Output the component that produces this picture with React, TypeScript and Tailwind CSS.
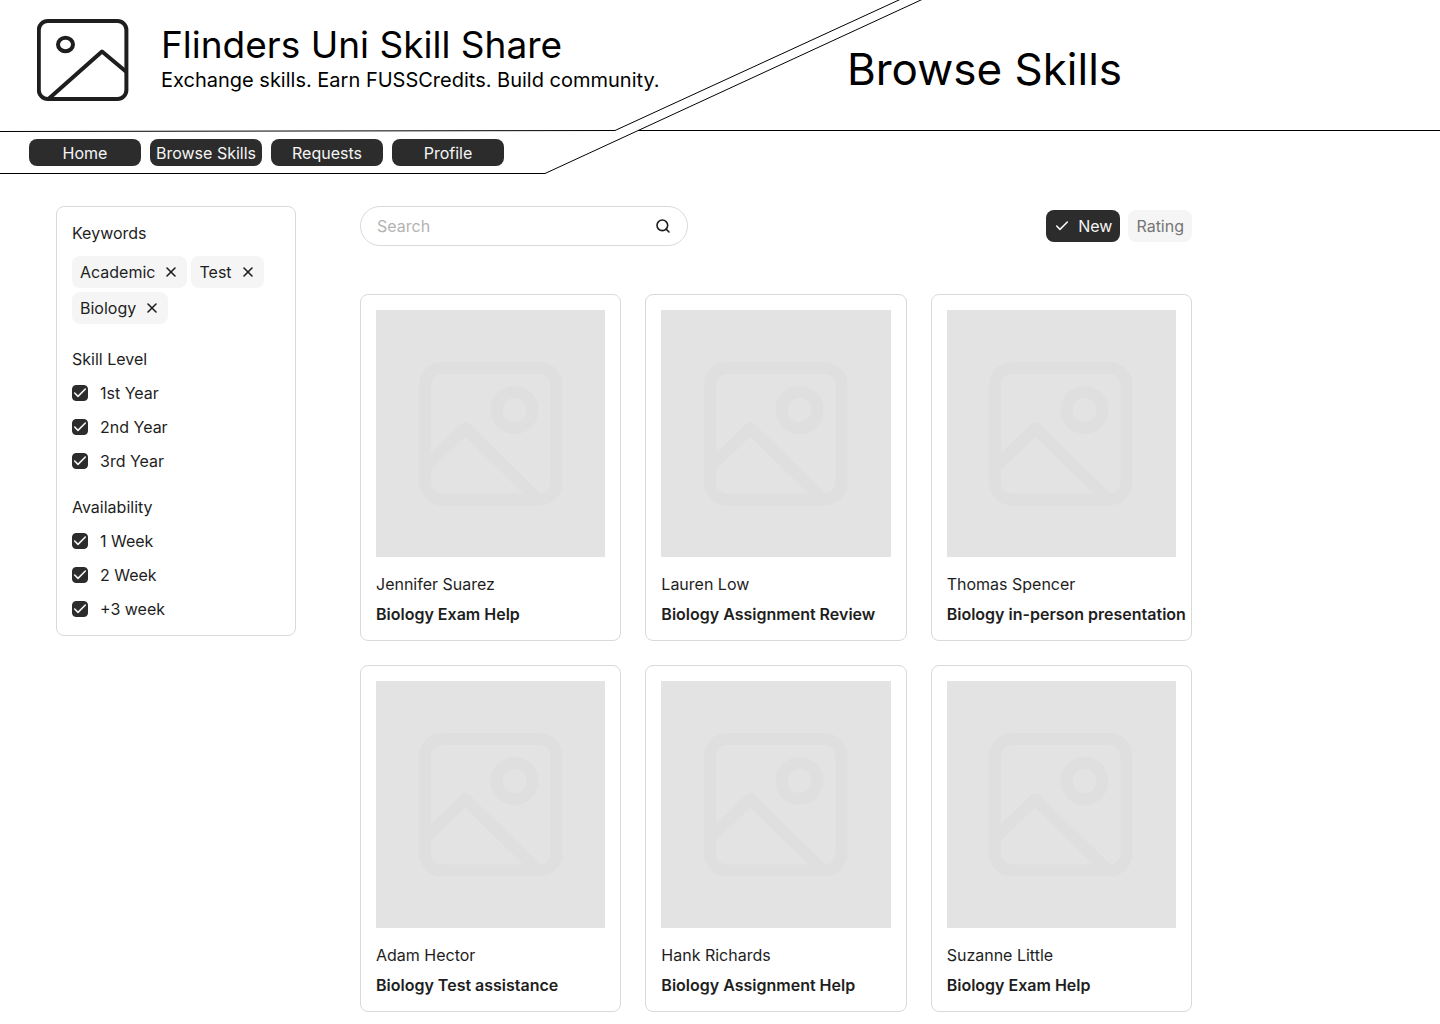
import { Check, Search, X } from "lucide-react";

const nav = ["Home", "Browse Skills", "Requests", "Profile"];
const keywords = ["Academic", "Test", "Biology"];
const filters = [
  { title: "Skill Level", options: ["1st Year", "2nd Year", "3rd Year"] },
  { title: "Availability", options: ["1 Week", "2 Week", "+3 week"] },
];
const skills = [
  { name: "Jennifer Suarez", title: "Biology Exam Help" },
  { name: "Lauren Low", title: "Biology Assignment Review" },
  { name: "Thomas Spencer", title: "Biology in-person presentation" },
  { name: "Adam Hector", title: "Biology Test assistance" },
  { name: "Hank Richards", title: "Biology Assignment Help" },
  { name: "Suzanne Little", title: "Biology Exam Help" },
];

function Logo() {
  return (
    <svg width="92" height="82" viewBox="0 0 92 82" fill="none" stroke="#1e1e1e" strokeWidth="4" strokeLinejoin="round" aria-hidden="true" className="shrink-0">
      <rect x="1.8" y="2" width="87.6" height="78" rx="9" />
      <ellipse cx="28.5" cy="25.5" rx="7.5" ry="6.8" />
      <path d="M12 79.5 65 32.5 89.5 53" />
    </svg>
  );
}

function Placeholder() {
  return (
    <div className="flex h-[247px] items-center justify-center bg-[#e3e3e3]">
      <svg width="144" height="144" viewBox="0 0 144 144" fill="none" stroke="#dfdfdf" strokeWidth="12" strokeLinejoin="round" aria-hidden="true">
        <rect x="6" y="6" width="131.5" height="131.5" rx="17" />
        <circle cx="95.5" cy="48" r="18" />
        <path d="M6 105 46.3 66.2 119 137.5" />
      </svg>
    </div>
  );
}

function HeaderLines() {
  return (
    <svg className="pointer-events-none absolute inset-0 h-full w-full" fill="none" stroke="#000" strokeWidth="1" aria-hidden="true">
      <path d="M0 131.5 615 130.5 900 -0.5" />
      <path d="M0 173.5H545L922 -0.5" />
      <line x1="638" y1="130.5" x2="100%" y2="130.5" />
    </svg>
  );
}

export default function App() {
  return (
    <div className="min-h-screen bg-white font-['Inter',sans-serif] text-base leading-[22px] text-[#1e1e1e]">
      <header className="relative h-[174px] text-black">
        <HeaderLines />
        <div className="relative flex h-[131px] pt-[19px] pl-[37px]">
          <div className="flex w-[810px] shrink-0 gap-8">
            <Logo />
            <div className="pt-[3px]">
              <p className="text-[37px] leading-[46px]">Flinders Uni Skill Share</p>
              <p className="text-xl leading-6">Exchange skills. Earn FUSSCredits. Build community.</p>
            </div>
          </div>
          <h1 className="pt-6 text-[44px] leading-[52px] whitespace-nowrap">Browse Skills</h1>
        </div>
        <nav className="relative flex gap-[9px] pt-2 pl-[29px]">
          {nav.map((item) => (
            <a key={item} href="#" className="flex h-[27px] w-28 items-center justify-center rounded-lg bg-[#2c2c2c] whitespace-nowrap text-[#f5f5f5]">
              {item}
            </a>
          ))}
        </nav>
      </header>

      <div className="flex items-start gap-16 px-14 pt-8 pb-3">
        <aside className="flex w-60 shrink-0 flex-col gap-6 rounded-lg border border-[#d9d9d9] p-[15px]">
          <section className="flex flex-col gap-3">
            <h2>Keywords</h2>
            <div className="flex flex-wrap gap-1">
              {keywords.map((word) => (
                <button key={word} type="button" className="flex h-8 items-center gap-2 rounded-lg bg-[#f5f5f5] px-2">
                  {word}
                  <X size={16} strokeWidth={2.4} aria-hidden="true" />
                </button>
              ))}
            </div>
          </section>
          {filters.map((group) => (
            <fieldset key={group.title}>
              <legend className="mb-3">{group.title}</legend>
              <div className="flex flex-col gap-3">
                {group.options.map((option) => (
                  <label key={option} className="flex items-center gap-3">
                    <span className="grid">
                      <input type="checkbox" defaultChecked className="peer col-start-1 row-start-1 size-4 appearance-none rounded border border-[#2c2c2c] checked:bg-[#2c2c2c]" />
                      <Check size={16} strokeWidth={2.4} aria-hidden="true" className="pointer-events-none col-start-1 row-start-1 text-[#f5f5f5] opacity-0 peer-checked:opacity-100" />
                    </span>
                    {option}
                  </label>
                ))}
              </div>
            </fieldset>
          ))}
        </aside>

        <main className="max-w-[832px] min-w-0 flex-1">
          <div className="flex items-center justify-between">
            <label className="flex h-10 w-[328px] items-center gap-2 rounded-full border border-[#d9d9d9] px-4">
              <input type="search" placeholder="Search" aria-label="Search skills" className="min-w-0 flex-1 outline-none placeholder:text-[#b3b3b3]" />
              <Search size={16} strokeWidth={2.4} aria-hidden="true" />
            </label>
            <div className="flex gap-2">
              <button type="button" aria-pressed="true" className="flex h-8 items-center gap-2 rounded-lg bg-[#2c2c2c] px-2 text-[#f5f5f5]">
                <Check size={16} strokeWidth={2.4} aria-hidden="true" />
                New
              </button>
              <button type="button" aria-pressed="false" className="flex h-8 items-center rounded-lg bg-[#f5f5f5] px-2 text-[#757575]">
                Rating
              </button>
            </div>
          </div>

          <div className="mt-12 grid grid-cols-3 gap-6">
            {skills.map((skill) => (
              <article key={skill.name} className="min-w-0 rounded-lg border border-[#d9d9d9] p-[15px]">
                <Placeholder />
                <p className="mt-4">{skill.name}</p>
                <h3 className="mt-2 font-semibold whitespace-nowrap">{skill.title}</h3>
              </article>
            ))}
          </div>
        </main>
      </div>
    </div>
  );
}
